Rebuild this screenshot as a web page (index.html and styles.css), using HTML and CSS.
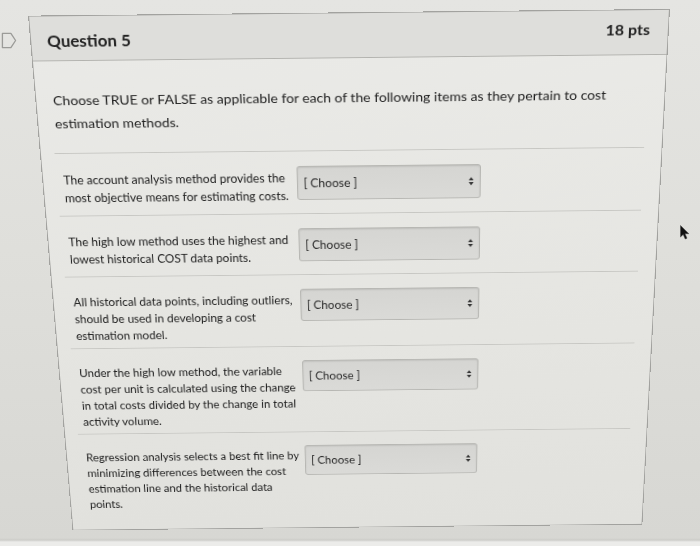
FILE: index.html
```html
<!DOCTYPE html>
<html lang="en">
<head>
<meta charset="utf-8">
<title>Question 5</title>
<link rel="stylesheet" href="styles.css">
</head>
<body>
<div class="screen">
  <div class="flag-col">
    <svg class="flag" viewBox="0 0 17 18" aria-hidden="true">
      <path d="M1.5 1.5 H10.5 L15.5 9 L10.5 16.5 H1.5 Z" fill="none" stroke="#9b9b98" stroke-width="1.4" stroke-linejoin="round"/>
    </svg>
  </div>
  <section class="card">
    <header class="q-header">
      <h2 class="q-name">Question 5</h2>
      <span class="q-points">18 pts</span>
    </header>
    <div class="q-body">
      <p class="q-text">Choose TRUE or FALSE as applicable for each of the following items as they pertain to cost<br>estimation methods.</p>
      <div class="match-list">
        <div class="match-row">
          <div class="match-text">The account analysis method provides the<br>most objective means for estimating costs.</div>
          <div class="select"><span>[ Choose ]</span><svg class="arrows" viewBox="0 0 6 10"><path d="M3 0.5 L5.6 4 H0.4 Z M3 9.5 L5.6 6 H0.4 Z" fill="#333"/></svg></div>
        </div>
        <div class="match-row">
          <div class="match-text">The high low method uses the highest and<br>lowest historical COST data points.</div>
          <div class="select"><span>[ Choose ]</span><svg class="arrows" viewBox="0 0 6 10"><path d="M3 0.5 L5.6 4 H0.4 Z M3 9.5 L5.6 6 H0.4 Z" fill="#333"/></svg></div>
        </div>
        <div class="match-row">
          <div class="match-text">All historical data points, including outliers,<br>should be used in developing a cost<br>estimation model.</div>
          <div class="select"><span>[ Choose ]</span><svg class="arrows" viewBox="0 0 6 10"><path d="M3 0.5 L5.6 4 H0.4 Z M3 9.5 L5.6 6 H0.4 Z" fill="#333"/></svg></div>
        </div>
        <div class="match-row">
          <div class="match-text">Under the high low method, the variable<br>cost per unit is calculated using the change<br>in total costs divided by the change in total<br>activity volume.</div>
          <div class="select"><span>[ Choose ]</span><svg class="arrows" viewBox="0 0 6 10"><path d="M3 0.5 L5.6 4 H0.4 Z M3 9.5 L5.6 6 H0.4 Z" fill="#333"/></svg></div>
        </div>
        <div class="match-row">
          <div class="match-text">Regression analysis selects a best fit line by<br>minimizing differences between the cost<br>estimation line and the historical data<br>points.</div>
          <div class="select"><span>[ Choose ]</span><svg class="arrows" viewBox="0 0 6 10"><path d="M3 0.5 L5.6 4 H0.4 Z M3 9.5 L5.6 6 H0.4 Z" fill="#333"/></svg></div>
        </div>
      </div>
    </div>
  </section>
  <svg class="cursor" viewBox="0 0 10 15" aria-hidden="true">
    <path d="M0.5 0.5 L0.5 12 L3.2 9.4 L5.2 14 L7 13.2 L5 8.7 L8.8 8.7 Z" fill="#111" stroke="#444" stroke-width="0.5"/>
  </svg>
</div>
</body>
</html>
```

FILE: styles.css
```css
html, body {
  margin: 0;
  height: 100%;
  overflow: hidden;
}

body {
  background: linear-gradient(180deg, #e5e5e2 0px, #dfdfdb 250px, #d7d7d3 538px, #cdcdc9 540px, #ececea 542px, #ececea 546px);
  font-family: Lato, "Open Sans", "Liberation Sans", sans-serif;
  color: #222;
}

.screen {
  position: relative;
  display: flex;
  align-items: flex-start;
  height: 546px;
  box-sizing: border-box;
  padding-top: 12px;
}

.flag-col {
  flex: none;
  width: 28px;
  padding-top: 20px;
}

.flag {
  display: block;
  width: 16px;
  height: 17px;
  margin-left: 1px;
}

.card {
  flex: none;
  width: 642px;
  box-sizing: border-box;
  border: 1px solid #a2a29f;
  background: linear-gradient(180deg, #eaeae7 0%, #e5e5e1 60%, #e1e1dd 100%);
  transform-origin: 348px 0;
  transform: perspective(1229px) rotateZ(-0.6deg) rotateX(-15deg);
}

.q-header {
  display: flex;
  justify-content: space-between;
  align-items: flex-start;
  height: 47px;
  box-sizing: border-box;
  padding: 0 18px 0 16px;
  background: #dededb;
  border-bottom: 1px solid #b3b3af;
}

.q-name {
  margin: 16px 0 0;
  font-size: 17px;
  line-height: 20px;
  font-weight: 700;
  color: #222;
}

.q-points {
  margin-top: 10px;
  font-size: 16px;
  line-height: 20px;
  font-weight: 700;
  color: #222;
}

.q-body {
  padding: 30px 18px 18px 14px;
}

.q-text {
  margin: 0 0 20px 3px;
  font-size: 14.2px;
  line-height: 24.5px;
  white-space: nowrap;
}

.match-row {
  display: flex;
  align-items: flex-start;
  border-top: 1px solid #c7c7c3;
  padding: 16px 0 4px 7px;
}

.match-text {
  flex: none;
  width: 242px;
  margin-top: 4px;
  font-size: 12.5px;
  line-height: 20px;
  white-space: nowrap;
}

.select {
  flex: none;
  display: flex;
  align-items: center;
  justify-content: space-between;
  width: 191px;
  height: 38px;
  box-sizing: border-box;
  margin-bottom: 11px;
  padding: 0 6px 0 6px;
  background: linear-gradient(180deg, #d5d5d2, #dadad7);
  border: 1px solid #b7b7b3;
  border-radius: 3px;
  box-shadow: inset 0 1px 2px rgba(0, 0, 0, 0.12);
  font-size: 12.5px;
  color: #2a2a2a;
}

.arrows {
  width: 6px;
  height: 10px;
}

.cursor {
  position: absolute;
  left: 680px;
  top: 225px;
  width: 10px;
  height: 15px;
}
```
